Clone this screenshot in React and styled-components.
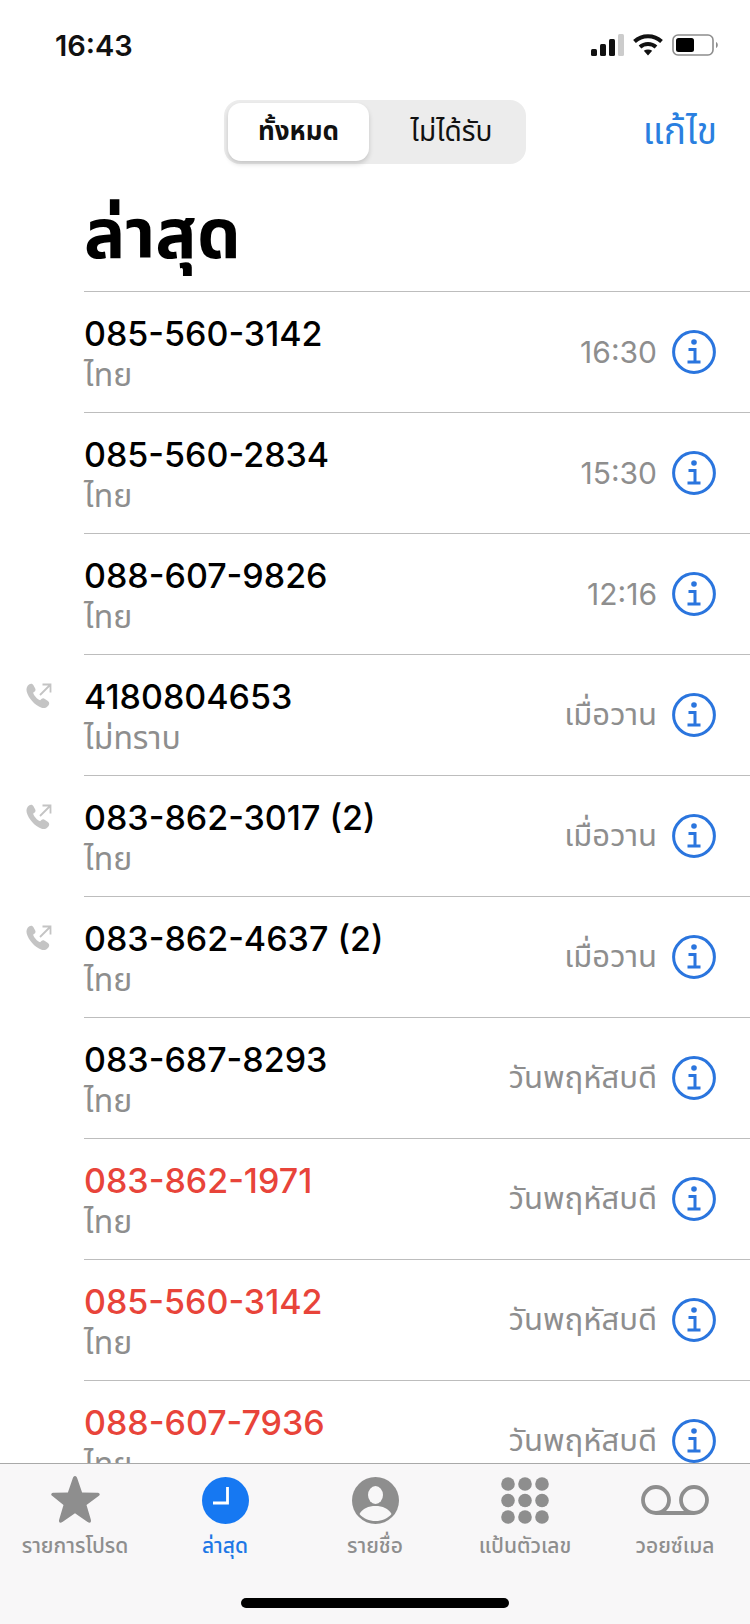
import React from "react";
import styled, { createGlobalStyle } from "styled-components";

const Global = createGlobalStyle`
  html, body { margin: 0; padding: 0; background: #fff; }
  body { font-family: Inter, "Noto Sans", "Noto Sans Thai", "DejaVu Sans", sans-serif; }
  * { box-sizing: border-box; }
`;

const Screen = styled.div`
  width: 750px; height: 1624px; display: flex; flex-direction: column; overflow: hidden; background: #fff;
`;
const StatusBar = styled.div`
  height: 90px; flex: none; display: flex; align-items: center; justify-content: space-between; padding: 0 32px 0 55px;
`;
const Clock = styled.div`
  font: 600 29px/1 Inter, sans-serif; color: #111;
`;
const StatusIcons = styled.div`
  display: flex; align-items: center; gap: 9px;
`;
const NavBar = styled.div`
  height: 74px; flex: none; position: relative; display: flex; justify-content: center;
  padding-top: 10px;
`;
const Segments = styled.div`
  width: 302px; height: 64px; display: flex; padding: 3px 4px; background: #ececec; border-radius: 16px;
`;
const Segment = styled.div`
  flex: 1; display: flex; align-items: center; justify-content: center; border-radius: 13px;
  font-size: ${p => (p.$active ? "26px" : "28px")}; color: #111; font-weight: ${p => (p.$active ? 700 : 400)};
  background: ${p => (p.$active ? "#fff" : "transparent")};
  box-shadow: ${p => (p.$active ? "0 3px 5px rgba(0,0,0,.16)" : "none")};
  margin-right: ${p => (p.$active ? "12px" : "0")};
`;
const Edit = styled.div`
  position: absolute; right: 33px; top: 13px; font-size: 37px; color: #2a7fe0; line-height: 56px;
`;
const TitleRow = styled.div`
  height: 127px; flex: none; padding: 10px 0 0 84px; display: flex; align-items: center;
`;
const Title = styled.h1`
  margin: 0; font-size: 69px; font-weight: 700; color: #000; line-height: 90px;
`;
const List = styled.div`
  flex: 1; min-height: 0; overflow: hidden; padding-left: 84px;
`;
const RowBox = styled.div`
  height: 121px; position: relative; border-top: 1px solid #bdbdbd; display: flex; align-items: center; justify-content: space-between; padding-right: 34px;
`;
const Outgoing = styled.svg`
  position: absolute; left: -58px; top: 28px;
`;
const Info = styled.div`
  display: flex; flex-direction: column;
`;
const Number = styled.div`
  font: 500 34px/44px Inter, sans-serif; color: ${p => (p.$missed ? "#e8443a" : "#000")};
  margin-top: 1px;
`;
const Sub = styled.div`
  font-size: 32px; line-height: 38px; color: #8e8e8e;
`;
const Side = styled.div`
  display: flex; align-items: center; gap: 15px;
`;
const When = styled.div`
  font-size: ${p => (p.$thai ? "31px" : "30px")}; color: #8e8e8e;
`;
const TabBar = styled.div`
  flex: none; height: 161px; background: #f8f7f8; border-top: 1px solid #a9a9a9; position: relative;
  display: grid; grid-template-columns: repeat(5, 150px); padding-top: 11px;
`;
const Tab = styled.div`
  display: flex; flex-direction: column; align-items: center;
`;
const IconBox = styled.div`
  height: 50px; display: flex; align-items: center; justify-content: center;
`;
const TabLabel = styled.div`
  margin-top: 6px; font-size: 21px; line-height: 30px; color: ${p => (p.$active ? "#1e78e6" : "#8e8e8e")};
  font-weight: 500; white-space: nowrap;
`;
const Home = styled.div`
  position: absolute; left: 241px; top: 134px; width: 268px; height: 10px; border-radius: 5px; background: #000;
`;

const InfoIcon = () => (
  <svg width="44" height="44" viewBox="0 0 44 44">
    <circle cx="22" cy="22" r="20.4" fill="none" stroke="#2a75de" strokeWidth="3" />
    <circle cx="22" cy="12" r="2.8" fill="#2a75de" />
    <path d="M16.500 19.500h6.500v12M15.500 32h13" fill="none" stroke="#2a75de" strokeWidth="3" />
  </svg>
);

const OutIcon = () => (
  <Outgoing width="26" height="26" viewBox="0 0 26 26">
    <path d="M3 1.500c2-1.300 3.600-.8 4.600 1l1.600 3c.7 1.400.3 2.500-.9 3.300l-1.200.9c.9 2.700 4 6.400 7 7.600l1.300-1.200c1.200-1 2.300-1 3.500-.1l3 2.100c1.600 1.200 1.800 2.800.5 4.400-1.600 2-4 3.200-6.800 2.300C8.500 22 2.500 15 .7 8.500 0 5.500 1 3 3 1.500z" fill="#c4c4c4" />
    <path d="M14 12 24 2M16.500 1.500h8v8" fill="none" stroke="#c4c4c4" strokeWidth="1.800" />
  </Outgoing>
);

const Signal = () => (
  <svg width="33" height="22" viewBox="0 0 33 22">
    <rect x="0" y="15" width="6" height="7" rx="1.500" fill="#111" />
    <rect x="9" y="10" width="6" height="12" rx="1.500" fill="#111" />
    <rect x="18" y="5" width="6" height="17" rx="1.500" fill="#111" />
    <rect x="27" y="0" width="6" height="22" rx="1.500" fill="#ccc" />
  </svg>
);
const Wifi = () => (
  <svg width="30" height="22" viewBox="0 0 30 22">
    <path d="M1.500 7.500C9 .5 21 .5 28.500 7.500" fill="none" stroke="#111" strokeWidth="4" />
    <path d="M7 13c4.500-4 11.500-4 16 0" fill="none" stroke="#111" strokeWidth="4" />
    <path d="M10.800 16.800 15 21.500l4.200-4.700c-2.500-1.800-5.900-1.800-8.400 0z" fill="#111" />
  </svg>
);
const Battery = () => (
  <svg width="46" height="22" viewBox="0 0 46 22">
    <rect x="1" y="1" width="40" height="20" rx="5" fill="none" stroke="#8d8d8d" strokeWidth="1.600" />
    <rect x="4" y="4" width="18" height="14" rx="2.500" fill="#000" />
    <path d="M44 8c1.300.6 1.800 1.600 1.800 3s-.5 2.400-1.800 3z" fill="#8d8d8d" />
  </svg>
);

const Star = () => (
  <svg width="52" height="50" viewBox="0 0 52 50">
    <path d="M26 1c1.200 0 1.800 1 2.400 2.800l4.700 13.700 14.800.2c2.900 0 3.800 1.700 1.700 3.400L37.500 30l4.300 14.600c.8 2.900-.8 4-3.200 2.300L26 38.300 13.400 46.900c-2.400 1.700-4 .6-3.200-2.300L14.500 30 3.400 21.100c-2.100-1.700-1.200-3.400 1.700-3.400l13.800-.2 4.700-13.700C24.200 2 24.800 1 26 1z" fill="#8e8e8e" />
  </svg>
);
const ClockIcon = () => (
  <svg width="47" height="47" viewBox="0 0 47 47">
    <circle cx="23.500" cy="23.500" r="23.500" fill="#1678f2" />
    <path d="M25.500 10v16H11" fill="none" stroke="#fff" strokeWidth="2.800" />
  </svg>
);
const Person = () => (
  <svg width="47" height="47" viewBox="0 0 47 47">
    <circle cx="23.500" cy="23.500" r="23.500" fill="#8e8e8e" />
    <ellipse cx="23.500" cy="18" rx="7.500" ry="9" fill="#f8f7f8" />
    <path d="M7.500 37c3-5.500 9-8 16-8s13 2.500 16 8c-4 4.700-9.500 7-16 7s-12-2.300-16-7z" fill="#f8f7f8" />
  </svg>
);
const Keypad = () => (
  <svg width="48" height="47" viewBox="0 0 48 47">
    {[0, 1, 2].flatMap(r =>
      [0, 1, 2].map(c => (
        <circle key={`${r}${c}`} cx={7 + c * 17} cy={7 + r * 16.5} r="6.800" fill="#8e8e8e" />
      ))
    )}
  </svg>
);
const Voicemail = () => (
  <svg width="68" height="31" viewBox="0 0 68 31">
    <circle cx="15" cy="15" r="13" fill="none" stroke="#8e8e8e" strokeWidth="3.800" />
    <circle cx="53" cy="15" r="13" fill="none" stroke="#8e8e8e" strokeWidth="3.800" />
    <path d="M15 28h38" stroke="#8e8e8e" strokeWidth="3.800" />
  </svg>
);

const rows = [
  { n: "085-560-3142", s: "ไทย", t: "16:30" },
  { n: "085-560-2834", s: "ไทย", t: "15:30" },
  { n: "088-607-9826", s: "ไทย", t: "12:16" },
  { n: "4180804653", s: "ไม่ทราบ", t: "เมื่อวาน", o: true },
  { n: "083-862-3017 (2)", s: "ไทย", t: "เมื่อวาน", o: true },
  { n: "083-862-4637 (2)", s: "ไทย", t: "เมื่อวาน", o: true },
  { n: "083-687-8293", s: "ไทย", t: "วันพฤหัสบดี" },
  { n: "083-862-1971", s: "ไทย", t: "วันพฤหัสบดี", m: true },
  { n: "085-560-3142", s: "ไทย", t: "วันพฤหัสบดี", m: true },
  { n: "088-607-7936", s: "ไทย", t: "วันพฤหัสบดี", m: true },
];

const tabs = [
  { l: "รายการโปรด", I: Star },
  { l: "ล่าสุด", I: ClockIcon, a: true },
  { l: "รายชื่อ", I: Person },
  { l: "แป้นตัวเลข", I: Keypad },
  { l: "วอยซ์เมล", I: Voicemail },
];

export default function App() {
  return (
    <Screen>
      <Global />
      <StatusBar>
        <Clock>16:43</Clock>
        <StatusIcons>
          <Signal />
          <Wifi />
          <Battery />
        </StatusIcons>
      </StatusBar>
      <NavBar>
        <Segments>
          <Segment $active>ทั้งหมด</Segment>
          <Segment>ไม่ได้รับ</Segment>
        </Segments>
        <Edit>แก้ไข</Edit>
      </NavBar>
      <TitleRow>
        <Title>ล่าสุด</Title>
      </TitleRow>
      <List>
        {rows.map(r => (
          <RowBox key={r.n + r.t}>
            {r.o && <OutIcon />}
            <Info>
              <Number $missed={r.m}>{r.n}</Number>
              <Sub>{r.s}</Sub>
            </Info>
            <Side>
              <When $thai={!/^\d/.test(r.t)}>{r.t}</When>
              <InfoIcon />
            </Side>
          </RowBox>
        ))}
      </List>
      <TabBar>
        {tabs.map(({ l, I, a }) => (
          <Tab key={l}>
            <IconBox>
              <I />
            </IconBox>
            <TabLabel $active={a}>{l}</TabLabel>
          </Tab>
        ))}
        <Home />
      </TabBar>
    </Screen>
  );
}
